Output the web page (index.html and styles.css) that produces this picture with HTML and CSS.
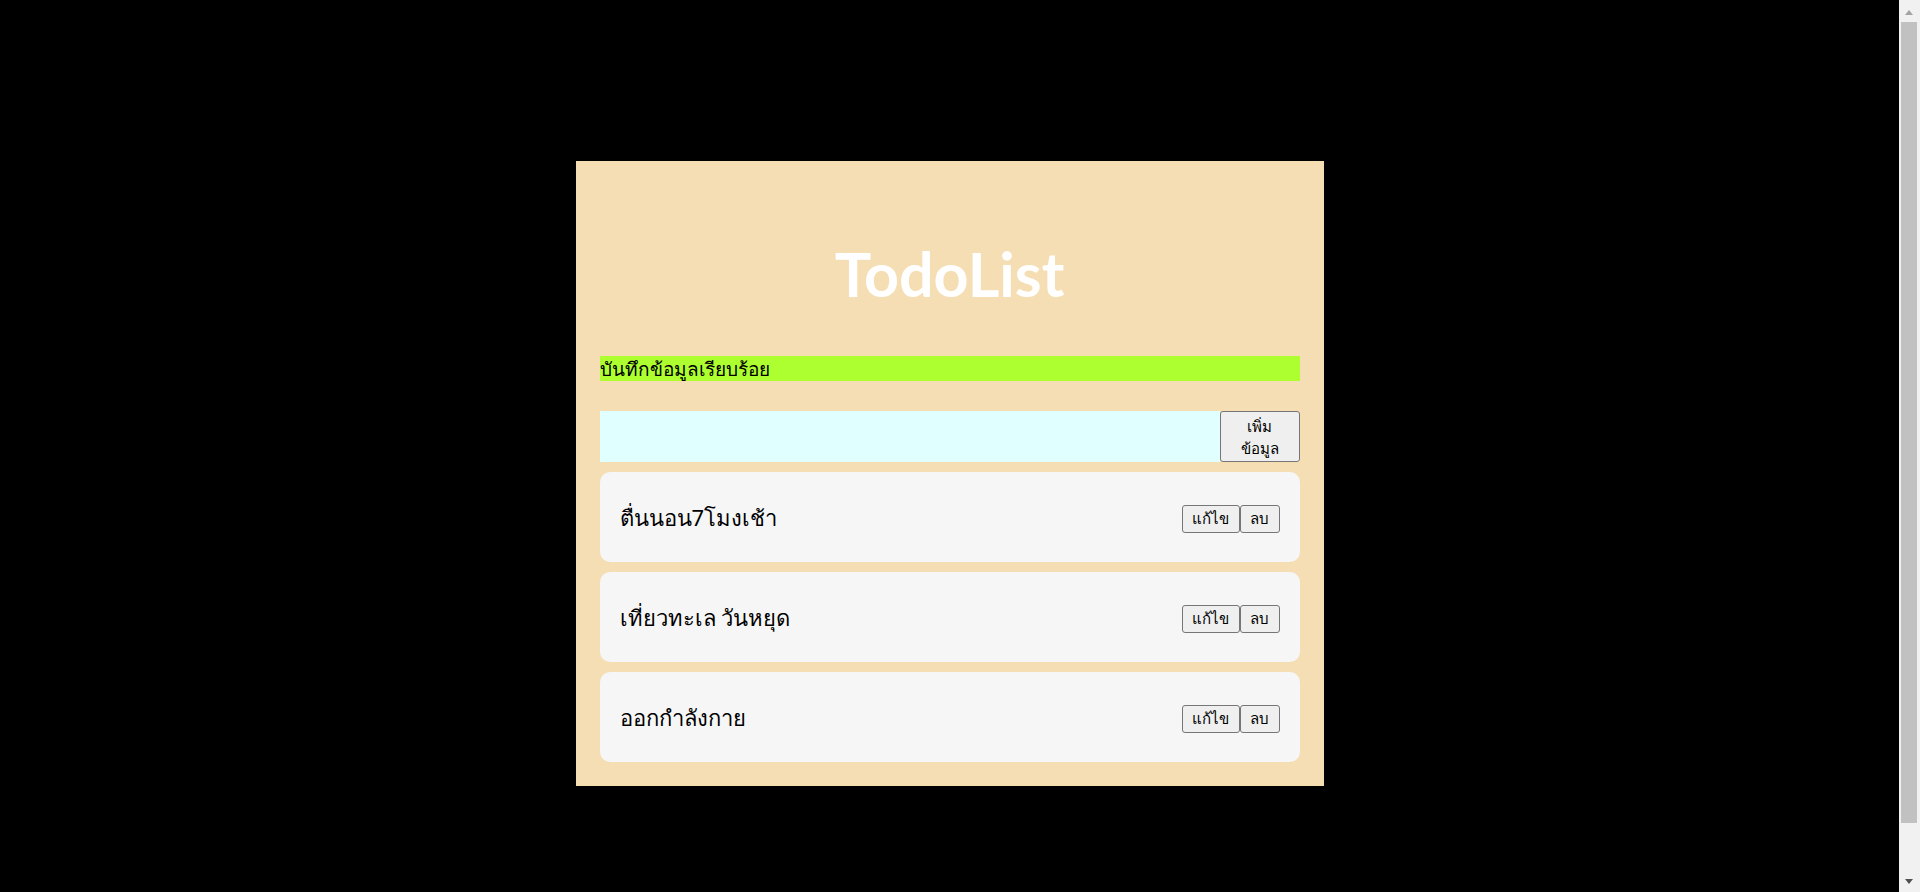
FILE: index.html
```html
<!DOCTYPE html>
<html lang="th">
<head>
<meta charset="utf-8">
<title>TodoList</title>
<link rel="stylesheet" href="styles.css">
</head>
<body>
<main class="page">
  <div class="app">
    <h1 class="title">TodoList</h1>
    <div class="alert">บันทึกข้อมูลเรียบร้อย</div>
    <form class="add-form">
      <input class="add-input" type="text">
      <button class="btn add-btn" type="button">เพิ่มข้อมูล</button>
    </form>
    <div class="list">
      <div class="item">
        <span class="item-text">ตื่นนอน7โมงเช้า</span>
        <div class="item-actions"><button class="btn" type="button">แก้ไข</button><button class="btn" type="button">ลบ</button></div>
      </div>
      <div class="item">
        <span class="item-text">เที่ยวทะเล วันหยุด</span>
        <div class="item-actions"><button class="btn" type="button">แก้ไข</button><button class="btn" type="button">ลบ</button></div>
      </div>
      <div class="item">
        <span class="item-text">ออกกำลังกาย</span>
        <div class="item-actions"><button class="btn" type="button">แก้ไข</button><button class="btn" type="button">ลบ</button></div>
      </div>
    </div>
  </div>
</main>
<div class="scrollbar" aria-hidden="true">
  <div class="sb-arrow sb-up"></div>
  <div class="sb-thumb"></div>
  <div class="sb-arrow sb-down"></div>
</div>
</body>
</html>
```
FILE: styles.css
```css
html, body {
  margin: 0;
  padding: 0;
}
body {
  background: #000;
  font-family: "Noto Sans", sans-serif;
}
.page {
  margin-right: 21px;
  padding-top: 161px;
  padding-bottom: 40px;
}
.app {
  width: 700px;
  margin: 0 auto;
  padding: 24px;
  background: #f5deb3;
  display: flex;
  flex-direction: column;
}
.title {
  margin: 53px 0 46px;
  font-family: Lato, "Open Sans", sans-serif;
  font-weight: 700;
  font-size: 61px;
  line-height: 72px;
  color: #fff;
  text-align: center;
}
.alert {
  background: #adff2f;
  color: #000;
  font-size: 19px;
  height: 25px;
  line-height: 27px;
}
.add-form {
  margin: 30px 0 0;
  display: flex;
  height: 51px;
}
.add-input {
  flex: 1;
  border: none;
  background: #e0ffff;
  padding: 0;
  margin: 0;
  outline: none;
}
.btn {
  font-family: "Noto Sans", sans-serif;
  font-size: 15px;
  background: #efefef;
  color: #000;
  border: 1px solid #767676;
  border-radius: 3px;
  padding: 1px 9.5px;
  margin: 0;
}
.add-btn {
  width: 80px;
  padding: 1px 12px;
  line-height: 22px;
}
.list {
  display: flex;
  flex-direction: column;
  gap: 10px;
  margin-top: 10px;
}
.item {
  height: 90px;
  background: #f6f6f6;
  border-radius: 10px;
  padding: 0 20px;
  display: flex;
  align-items: center;
  justify-content: space-between;
}
.item-text {
  font-size: 22px;
  color: #000;
  margin-top: 3px;
}
.item-actions {
  display: flex;
  margin-top: 4px;
}
.item-actions .btn {
  height: 28px;
}
.scrollbar {
  position: fixed;
  top: 0;
  right: 0;
  bottom: 0;
  width: 21px;
  background: #f1f1f1;
}
.sb-thumb {
  position: absolute;
  top: 22px;
  left: 2px;
  right: 3px;
  height: 801px;
  background: #c1c1c1;
}
.sb-arrow {
  position: absolute;
  left: 6px;
  width: 0;
  height: 0;
  border-left: 4.5px solid transparent;
  border-right: 4.5px solid transparent;
}
.sb-up {
  top: 10px;
  border-bottom: 5px solid #a3a3a3;
}
.sb-down {
  bottom: 8px;
  border-top: 5px solid #505050;
}
```
